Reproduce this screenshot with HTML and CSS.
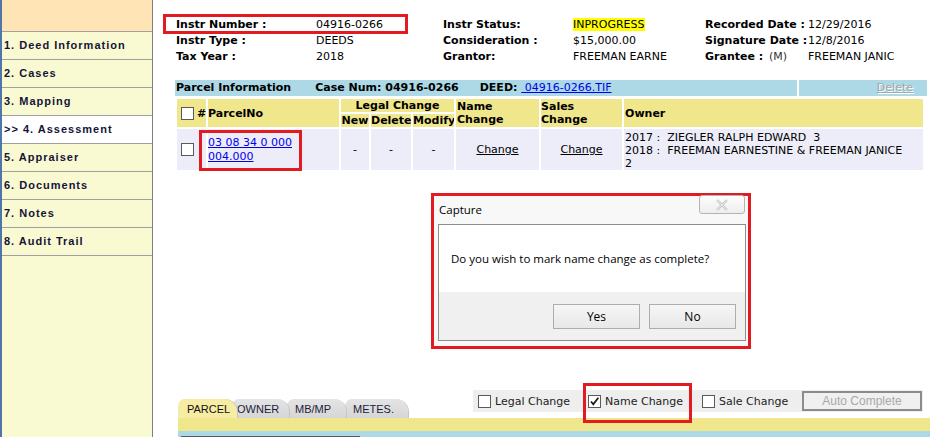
FILE: index.html
```html
<!DOCTYPE html>
<html>
<head>
<meta charset="utf-8">
<title>Assessment</title>
<link rel="stylesheet" href="styles.css">
</head>
<body>
<div class="page">
  <aside class="sidebar">
    <div class="side-head"></div>
    <div class="side-item">1. Deed Information</div>
    <div class="side-item">2. Cases</div>
    <div class="side-item">3. Mapping</div>
    <div class="side-item active">&gt;&gt; 4. Assessment</div>
    <div class="side-item">5. Appraiser</div>
    <div class="side-item">6. Documents</div>
    <div class="side-item">7. Notes</div>
    <div class="side-item">8. Audit Trail</div>
  </aside>

  <main class="main">
    <div class="info">
      <div class="l">Instr Number :</div><div>04916-0266</div>
      <div class="l">Instr Status:</div><div><span class="hl">INPROGRESS</span></div>
      <div class="l">Recorded Date :</div><div>12/29/2016</div>

      <div class="l">Instr Type :</div><div>DEEDS</div>
      <div class="l">Consideration :</div><div>$15,000.00</div>
      <div class="l">Signature Date :</div><div>12/8/2016</div>

      <div class="l">Tax Year :</div><div>2018</div>
      <div class="l">Grantor:</div><div>FREEMAN EARNE</div>
      <div class="l">Grantee : <span class="m">(M)</span></div><div>FREEMAN JANIC</div>
    </div>

    <div class="pbar">
      <div class="pbar-main"><span>Parcel Information</span><span class="case">Case Num: 04916-0266</span><span class="deed">DEED:</span> <a class="tif">&nbsp;04916-0266.TIF</a></div>
      <div class="pbar-side"><a class="del">Delete</a></div>
    </div>

    <table class="grid">
      <colgroup>
        <col class="w-cb"><col class="w-pn"><col class="w-new"><col class="w-del"><col class="w-mod"><col class="w-name"><col class="w-sales"><col class="w-owner">
      </colgroup>
      <tr class="h1">
        <th rowspan="2" class="c-cb"><span class="cb"></span><span class="hash">#</span></th>
        <th rowspan="2">ParcelNo</th>
        <th colspan="3" class="ctr">Legal Change</th>
        <th rowspan="2" class="name-h">Name<br>Change</th>
        <th rowspan="2">Sales<br>Change</th>
        <th rowspan="2" class="own-h">Owner</th>
      </tr>
      <tr class="h2">
        <th class="ctr">New</th>
        <th class="ctr">Delete</th>
        <th class="ctr">Modify</th>
      </tr>
      <tr class="row">
        <td class="c-cb"><span class="cb"></span></td>
        <td class="pn"><a>03 08 34 0 000<br>004.000</a></td>
        <td class="ctr">-</td>
        <td class="ctr">-</td>
        <td class="ctr">-</td>
        <td class="ctr"><a class="chg">Change</a></td>
        <td class="ctr"><a class="chg">Change</a></td>
        <td class="own">2017 :&nbsp; ZIEGLER RALPH EDWARD&nbsp; 3<br>2018 :&nbsp; FREEMAN EARNESTINE &amp; FREEMAN JANICE<br>2</td>
      </tr>
    </table>

    <div class="bottom">
      <div class="tabrow">
        <div class="tabs">
          <div class="tab t-parcel">PARCEL</div>
          <div class="tab t-owner">OWNER</div>
          <div class="tab t-mb">MB/MP</div>
          <div class="tab t-metes">METES.</div>
        </div>
        <div class="cbbar">
          <div class="opt o1"><span class="cb"></span><span>Legal Change</span></div>
          <div class="opt o2"><span class="cb"><svg width="11" height="11" viewBox="0 0 11 11"><path d="M2 5.5 L4.3 8.3 L9.3 1.8" fill="none" stroke="#1a1a1a" stroke-width="1.8"/></svg></span><span>Name Change</span></div>
          <div class="opt o3"><span class="cb"></span><span>Sale Change</span></div>
          <div class="auto">Auto Complete</div>
        </div>
      </div>
      <div class="band-y"></div>
      <div class="band-b"><div class="dark-line"></div></div>
    </div>
  </main>

  <div class="mark mark-instr"></div>
  <div class="mark mark-parcel"></div>
  <div class="mark mark-name"></div>

  <div class="dialog">
    <div class="dlg-title">Capture</div>
    <div class="dlg-close"><svg width="16" height="12" viewBox="0 0 16 12"><path d="M3 1 L13 11 M13 1 L3 11" stroke="#c4c4c4" stroke-width="2.4" fill="none"/><path d="M3 1 L13 11 M13 1 L3 11" stroke="#f4f4f4" stroke-width="0.8" fill="none"/></svg></div>
    <div class="dlg-panel">
      <div class="dlg-msg">Do you wish to mark name change as complete?</div>
      <div class="dlg-btns">
        <div class="btn">Yes</div>
        <div class="btn">No</div>
      </div>
    </div>
  </div>
</div>
</body>
</html>
```

FILE: styles.css
```css
* { box-sizing: border-box; }

body {
  margin: 0;
  font-family: "DejaVu Sans", Verdana, sans-serif;
  font-size: 11px;
  color: #000;
  background: #fff;
}

.page {
  position: relative;
  display: flex;
  width: 930px;
  height: 437px;
  overflow: hidden;
}

/* ---------- sidebar ---------- */
.sidebar {
  flex: none;
  width: 153px;
  border-left: 2px solid #4f76a8;
  border-right: 1px solid #7f7f7f;
  background: #fafad2;
  font-family: "Liberation Sans", Arial, sans-serif;
  font-weight: bold;
  font-size: 11px;
  letter-spacing: 1px;
  color: #141438;
}
.side-head {
  height: 32px;
  background: #ffe4b5;
  border-bottom: 1px solid #a0a0a0;
}
.side-item {
  height: 28px;
  line-height: 27px;
  padding-left: 2px;
  border-bottom: 1px solid #a0a0a0;
  white-space: nowrap;
}
.side-item.active { background: #fff; }

/* ---------- main ---------- */
.main {
  flex: 1;
  min-width: 0;
  display: flex;
  flex-direction: column;
  padding-left: 22px;
}

.info {
  display: grid;
  grid-template-columns: 140px 127px 130px 132px 103px auto;
  grid-template-rows: 16px 16px 15px;
  line-height: 16px;
  padding: 17px 0 0 1px;
  white-space: nowrap;
}
.info .l { font-weight: bold; }
.info .m { font-weight: normal; color: #333; margin-left: 2px; }
.hl { background: #ffff00; }

.pbar {
  display: flex;
  gap: 2px;
  width: 752px;
  height: 16px;
  margin-top: 16px;
  line-height: 16px;
}
.pbar-main {
  width: 622px;
  background: #add8e6;
  padding-left: 1px;
  font-weight: bold;
  white-space: nowrap;
}
.case { margin-left: 24px; }
.deed { margin-left: 21px; }
.tif {
  font-weight: normal;
  color: #0000ee;
  text-decoration: underline;
}
.pbar-side {
  flex: 1;
  background: #add8e6;
  text-align: right;
  padding-right: 14px;
}
.del {
  color: #a6a6a6;
  text-decoration: underline;
  text-shadow: 1px 1px 0 #fff;
}

/* ---------- table ---------- */
.grid {
  border-collapse: separate;
  border-spacing: 2px;
  table-layout: fixed;
  width: 750px;
  margin-top: 1px;
}
.w-cb { width: 29px; }
.w-pn { width: 131px; }
.w-new { width: 28px; }
.w-del { width: 40px; }
.w-mod { width: 41px; }
.w-name { width: 83px; }
.w-sales { width: 81px; }
.w-owner { width: 299px; }

.grid th {
  background: #f0e68c;
  font-weight: bold;
  line-height: 13px;
  height: 13px;
  padding: 0;
  text-align: left;
  vertical-align: middle;
  white-space: nowrap;
  overflow: hidden;
}
.grid th.ctr, .grid td.ctr { text-align: center; }
.grid th.name-h { padding-left: 1px; }
.grid th.own-h { padding-left: 1px; }
.grid td {
  background: #ededf9;
  padding: 0;
  height: 40px;
  line-height: 13px;
  vertical-align: middle;
}
.c-cb { padding-left: 4px !important; }
.c-cb .cb { vertical-align: middle; }
.hash { margin-left: 3px; vertical-align: middle; }

.cb {
  display: inline-block;
  width: 13px;
  height: 13px;
  border: 1px solid #5a5a5a;
  background: #fff;
  flex: none;
  position: relative;
}
.cb svg { position: absolute; left: 0; top: 0; }

.pn a {
  color: #0000ee;
  text-decoration: underline;
  line-height: 14px;
  display: inline-block;
  margin-top: 1px;
}
.chg { color: #000; text-decoration: underline; }
.own { padding-left: 1px !important; padding-top: 2px !important; white-space: nowrap; }

/* ---------- bottom ---------- */
.bottom {
  margin-top: auto;
  margin-left: 3px;
}
.tabrow {
  display: flex;
  height: 28px;
}
.tabs {
  display: flex;
  align-self: flex-end;
  height: 19px;
}
.tab {
  position: relative;
  height: 19px;
  line-height: 20px;
  font-family: "Liberation Sans", Arial, sans-serif;
  font-size: 11px;
  color: #1c1c3a;
  background: linear-gradient(#e4e4e4, #d6d6d6);
  border-radius: 7px 13px 0 0;
  box-shadow: 1px 0 0 #c4c4c4;
  white-space: nowrap;
}
.t-parcel {
  width: 59px;
  padding-left: 9px;
  background: #f7eca4;
  z-index: 4;
  color: #111;
}
.t-owner { width: 57px; margin-left: -5px; padding-left: 5px; z-index: 3; }
.t-mb { width: 59px; margin-left: -2px; padding-left: 8px; z-index: 2; }
.t-metes { width: 63px; margin-left: -1px; padding-left: 8px; z-index: 1; }

.cbbar {
  display: flex;
  align-items: center;
  align-self: flex-start;
  width: 450px;
  height: 22px;
  margin-left: auto;
  margin-right: 7px;
  padding-left: 5px;
  background: #eeeeee;
  color: #222;
}
.opt {
  display: flex;
  align-items: center;
  gap: 4px;
  white-space: nowrap;
}
.o1 { width: 110px; }
.o2 { width: 114px; }
.o3 { width: 100px; }
.auto {
  width: 120px;
  height: 20px;
  border: 2px solid #8c8c8c;
  background: #f0f0f0;
  color: #a9a9a9;
  font-family: "Liberation Sans", Arial, sans-serif;
  font-size: 12px;
  line-height: 16px;
  text-align: center;
}

.band-y { height: 13px; background: #f0e68c; }
.band-b { height: 6px; background: #add8e6; overflow: hidden; }
.dark-line {
  margin: 5px 0 0 3px;
  width: 179px;
  height: 1px;
  background: #5a5a5a;
}

/* ---------- annotation marks ---------- */
.mark {
  position: absolute;
  border: 3px solid #e21b22;
  pointer-events: none;
}
.mark-instr { left: 163px; top: 14px; width: 245px; height: 20px; }
.mark-parcel { left: 199px; top: 130px; width: 103px; height: 41px; }
.mark-name { left: 583px; top: 383px; width: 109px; height: 40px; }

/* ---------- dialog ---------- */
.dialog {
  position: absolute;
  left: 431px;
  top: 193px;
  width: 320px;
  height: 156px;
  border: 3px solid #e21b22;
  background: #f8f8f8;
  font-family: "Open Sans", "Noto Sans", sans-serif;
  font-size: 11.5px;
  color: #000;
}
.dlg-title {
  height: 28px;
  line-height: 28px;
  padding-left: 5px;
}
.dlg-close {
  position: absolute;
  top: -1px;
  right: 3px;
  width: 46px;
  height: 19px;
  border: 1px solid #b4b4b4;
  border-radius: 3px;
  background: linear-gradient(#fdfdfd, #eeeeee);
  display: flex;
  align-items: center;
  justify-content: center;
}
.dlg-panel {
  margin: 0 2px 0 4px;
  height: 117px;
  border: 1px solid #8e8e8e;
}
.dlg-msg {
  height: 67px;
  background: #fff;
  padding: 26px 0 0 12px;
  line-height: 16px;
}
.dlg-btns {
  height: 48px;
  background: #f0f0f0;
  display: flex;
  justify-content: flex-end;
  gap: 9px;
  padding: 12px 9px 0 0;
}
.btn {
  width: 87px;
  height: 25px;
  border: 1px solid #adadad;
  background: linear-gradient(#f6f6f6, #e8e8e8);
  display: flex;
  align-items: center;
  justify-content: center;
  font-size: 12px;
}
```
